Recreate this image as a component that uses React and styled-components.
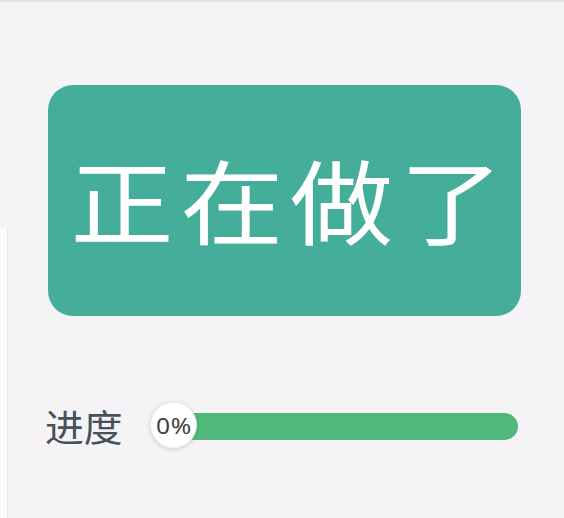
import React from 'react'
import styled, { createGlobalStyle } from 'styled-components'

const GlobalStyle = createGlobalStyle`
  html, body {
    margin: 0;
    padding: 0;
    background: #f5f3f6;
  }
  body {
    font-family: "Noto Sans", "Noto Sans CJK SC", sans-serif;
  }
`;

const Page = styled.div`
  width: 564px;
  height: 518px;
  box-sizing: border-box;
  border-top: 2px solid #e6e4e8;
  background: #f5f3f6;
  position: relative;
  overflow: hidden;
  display: flex;
  flex-direction: column;
  padding: 83px 43px 0 48px;
`;

const SidePanel = styled.div`
  position: absolute;
  left: 0;
  top: 225px;
  bottom: 0;
  width: 7px;
  background: #fbfafc;
  border-right: 1px solid #e9e7eb;
`;

const StatusCard = styled.div`
  height: 231px;
  border-radius: 25px;
  background: #45ae9a;
  display: flex;
  align-items: center;
  justify-content: center;
`;

const StatusText = styled.span`
  color: #ffffff;
  font-family: "Noto Sans CJK SC", sans-serif;
  font-size: 92px;
  letter-spacing: 6px;
  line-height: 1;
  margin-left: 12px;
  margin-bottom: 6px;
  transform: scaleX(1.12);
  white-space: nowrap;
`;

const ProgressRow = styled.div`
  display: flex;
  align-items: center;
  margin-top: 92px;
  margin-right: 3px;
  margin-left: -3px;
`;

const Label = styled.span`
  font-family: "Noto Sans CJK SC", sans-serif;
  font-size: 37px;
  color: #45525c;
  line-height: 1;
  width: 106px;
  transform: scaleX(1.05);
  transform-origin: left center;
  white-space: nowrap;
`;

const Track = styled.div`
  flex: 1;
  position: relative;
  height: 27px;
  border-radius: 14px;
  background: #52b87a;
  margin-left: 30px;
`;

const Thumb = styled.div`
  position: absolute;
  left: -31px;
  top: calc(50% - 2px);
  transform: translateY(-50%);
  width: 47px;
  height: 47px;
  box-sizing: border-box;
  border-radius: 50%;
  background: #ffffff;
  box-shadow: 0 1px 4px rgba(0, 0, 0, 0.16);
  border: 1px solid #dff0ea;
  display: flex;
  align-items: center;
  justify-content: center;
`;

const ThumbText = styled.span`
  font-family: "Noto Sans", sans-serif;
  font-size: 22px;
  letter-spacing: 0.5px;
  color: #3f3f3f;
  line-height: 1;
  transform: scaleX(1.12);
`;

const App = () => {
  return (
    <Page>
      <GlobalStyle />
      <SidePanel />
      <StatusCard>
        <StatusText>正在做了</StatusText>
      </StatusCard>
      <ProgressRow>
        <Label>进度</Label>
        <Track>
          <Thumb>
            <ThumbText>0%</ThumbText>
          </Thumb>
        </Track>
      </ProgressRow>
    </Page>
  )
}

export default App
